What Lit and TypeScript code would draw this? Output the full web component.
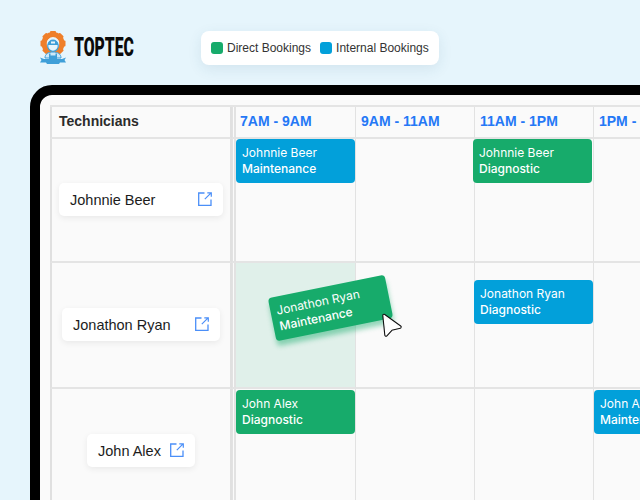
import { LitElement, html, css, svg } from "lit";
import { customElement } from "lit/decorators.js";

type Booking = { name: string; job: string; kind: "green" | "blue"; cls?: string };
type Row = { name: string; cls: string; bookings: (Booking | null)[] };

const rows: Row[] = [
  {
    name: "Johnnie Beer",
    cls: "r1",
    bookings: [
      { name: "Johnnie Beer", job: "Maintenance", kind: "blue" },
      null,
      { name: "Johnnie Beer", job: "Diagnostic", kind: "green", cls: "shift-2" },
      null,
    ],
  },
  {
    name: "Jonathon Ryan",
    cls: "r2",
    bookings: [
      null,
      null,
      { name: "Jonathon Ryan", job: "Diagnostic", kind: "blue", cls: "shift-1" },
      null,
    ],
  },
  {
    name: "John Alex",
    cls: "r3",
    bookings: [
      { name: "John Alex", job: "Diagnostic", kind: "green" },
      null,
      null,
      { name: "John Alex", job: "Maintenance", kind: "blue" },
    ],
  },
];

const linkIcon = svg`<svg class="link" width="14" height="14" viewBox="0 0 14 14" fill="none" stroke="#4b8ff8" stroke-width="1.3">
  <path d="M6.5 1H.7v12.3H13V7.5"/><path d="M6.8 7.2 12.6 1.400M9.300 .8h4v4" stroke-width="1.200" />
</svg>`;

const teeth = [0, 45, 90, 135, 180, 225, 270, 315];
const cursorPath = "M4 4.500 20 16 11.500 18 6 24z";

@customElement("app-root")
export class AppRoot extends LitElement {
  static styles = css`
    :host {
      display: block;
      width: 640px;
      height: 500px;
      overflow: hidden;
      position: relative;
      background: #e6f5fc;
      font-family: Inter, "Liberation Sans", sans-serif;
    }
    .top {
      display: flex;
      align-items: flex-start;
      height: 85px;
      padding: 31px 0 0 39px;
      box-sizing: border-box;
    }
    .brand {
      display: flex;
      align-items: center;
      gap: 7px;
      width: 162px;
      height: 33px;
    }
    .brand-name {
      font-family: "Roboto", "Liberation Sans", sans-serif;
      font-weight: 900;
      font-size: 25px;
      line-height: 30px;
      color: #0b0b0b;
      display: inline-block;
      transform: scaleX(0.63);
      transform-origin: left center;
      white-space: nowrap;
    }
    .legend {
      display: flex;
      align-items: center;
      height: 34px;
      padding: 0 10px;
      gap: 9px;
      background: #fff;
      border-radius: 8px;
      box-shadow: 0 4px 14px rgba(40, 90, 120, 0.1);
      font-family: "Liberation Sans", sans-serif;
      font-size: 12px;
      color: #333;
    }
    .legend-item { display: flex; align-items: center; gap: 4px; white-space: nowrap; }
    .dot { width: 12px; height: 12px; border-radius: 3px; }
    .dot.green, .booking.green { background: #17ab6b; }
    .dot.blue, .booking.blue { background: #02a0da; }
    .frame {
      margin-left: 30px;
      width: 720px;
      height: 500px;
      box-sizing: border-box;
      border: 10px solid #000;
      border-radius: 22px;
      background: #fafafa;
      padding: 10px 0 0 10px;
    }
    .grid {
      display: grid;
      grid-template-columns: 182px 4px 120px repeat(4, 119px);
      grid-template-rows: 32px 124px 126px 126px;
      border-top: 2px solid #e4e4e4;
      position: relative;
    }
    .cell {
      box-sizing: border-box;
      border-right: 1px solid #e2e2e2;
      border-bottom: 2px solid #e4e4e4;
      min-width: 0;
    }
    .tech {
      border-left: 2px solid #e0e0e0;
      border-right: 2px solid #e0e0e0;
      display: flex;
      align-items: center;
      justify-content: center;
      padding-bottom: 2px;
    }
    .gutter {
      border-left: 1px solid #e2e2e2;
      border-right: 2px solid #e2e2e2;
      border-bottom: 2px solid #e4e4e4;
      box-sizing: border-box;
    }
    .head-tech {
      justify-content: flex-start;
      padding-left: 7px;
      font-family: "Liberation Sans", sans-serif;
      font-size: 14px;
      font-weight: 700;
      color: #2b2b2b;
    }
    .head-slot {
      display: flex;
      align-items: center;
      padding: 0 0 2px 5px;
      font-family: "Liberation Sans", sans-serif;
      font-size: 14px;
      font-weight: 700;
      color: #2478f6;
      white-space: nowrap;
      overflow: hidden;
    }
    .head-slot.first { padding-left: 4px; }
    .pill {
      display: flex;
      align-items: center;
      justify-content: space-between;
      height: 33px;
      box-sizing: border-box;
      background: #fff;
      border-radius: 5px;
      padding: 0 11px;
      font-family: "Liberation Sans", sans-serif;
      font-size: 14.5px;
      color: #1c1c1c;
      box-shadow: 0 2px 6px rgba(0, 0, 0, 0.07);
      white-space: nowrap;
    }
    .pill span { position: relative; top: 1px; }
    .pill.r1 { width: 164px; }
    .pill.r2 { width: 158px; }
    .pill.r3 { width: 108px; }
    .booking {
      width: 119px;
      height: 44px;
      box-sizing: border-box;
      border-radius: 4px;
      padding: 6px 6px;
      color: #fff;
      font-size: 12px;
      line-height: 16px;
      white-space: nowrap;
      overflow: hidden;
    }
    .booking b { font-weight: 500; display: block; }
    .slot { position: relative; }
    .slot.r2 .booking { margin-top: 17px; }
    .slot.r3 .booking { margin-top: 1px; }
    .shift-1 { margin-left: -1px; }
    .shift-2 { margin-left: -2px; }
    .highlight { background: #e0f0ea; }
    .drag {
      position: absolute;
      left: 271px;
      top: 286px;
      width: 119px;
      height: 44px;
      box-sizing: border-box;
      transform: rotate(-11.5deg);
      background: #17ab6b;
      border-radius: 4px;
      padding: 6px 6px;
      color: #fff;
      font-size: 12px;
      line-height: 16px;
      box-shadow: 0 5px 5px rgba(23, 171, 107, 0.45);
      white-space: nowrap;
    }
    .drag b { font-weight: 500; display: block; }
    .cursor { position: absolute; left: 380px; top: 311px; }
  `;

  render() {
    const slots = ["7AM - 9AM", "9AM - 11AM", "11AM - 1PM", "1PM - 3PM", ""];
    return html`
      <div class="top">
        <div class="brand">
          <svg width="28" height="33" viewBox="0 0 28 33">
            <g fill="#ef7f2a">
              ${teeth.map(
                (a) => svg`<rect x="11" y="0" width="6" height="6" rx="1" transform="rotate(${a} 14 12.500)"/>`,
              )}
            </g>
            <circle cx="14" cy="12.500" r="9" fill="none" stroke="#ef7f2a" stroke-width="5"/>
            <path fill="#cfe8f8" stroke="#3f9fd8" stroke-width="1" d="M6 27c0-4 3-6 8-6s8 2 8 6z"/>
            <path fill="#3f9fd8" d="M10 22.500h1.500v2h5v-2H18V28h-8z"/>
            <path fill="#3f9fd8" d="M1 26.500 5 28h18l4-1.500-1.500 2.500 1.500 2.500H21l-1 1.500H8l-1-1.500H1l1.500-2.500z"/>
            <circle cx="14" cy="15" r="5.300" fill="#e6f5fc" stroke="#3f9fd8" stroke-width="1.200"/>
            <path fill="#3f9fd8" d="M8.800 14c.2-3.600 2.400-5.500 5.200-5.500s5 1.900 5.200 5.500z"/>
            <path fill="#e6f5fc" d="M12 10.500h4v2h-4z"/>
          </svg>
          <span class="brand-name">TOPTEC</span>
        </div>
        <div class="legend">
          <span class="legend-item"><span class="dot green"></span>Direct Bookings</span>
          <span class="legend-item"><span class="dot blue"></span>Internal Bookings</span>
        </div>
      </div>
      <div class="frame">
        <div class="grid">
          <div class="cell tech head-tech">Technicians</div>
          <div class="gutter"></div>
          ${slots.map((s, i) => html`<div class="cell head-slot ${i === 0 ? "first" : ""}">${s}</div>`)}
          ${rows.map(
            (r) => html`
              <div class="cell tech">
                <div class="pill ${r.cls}"><span>${r.name}</span>${linkIcon}</div>
              </div>
              <div class="gutter"></div>
              ${r.bookings.map(
                (b, i) => html`<div class="cell slot ${r.cls} ${r.cls === "r2" && i === 0 ? "highlight" : ""}">
                  ${b
                    ? html`<div class="booking ${b.kind} ${b.cls ?? ""}">${b.name}<b>${b.job}</b></div>`
                    : ""}
                </div>`,
              )}
              <div class="cell slot"></div>
            `,
          )}
        </div>
      </div>
      <div class="drag">Jonathon Ryan<b>Maintenance</b></div>
      <svg class="cursor" width="26" height="30" viewBox="0 0 26 30">
        <path d=${cursorPath} fill="#111" stroke="#111" stroke-width="3.500" stroke-linejoin="round"/>
        <path d=${cursorPath} fill="#fff" stroke="#fff" stroke-width="1.300" stroke-linejoin="round"/>
      </svg>
    `;
  }
}
